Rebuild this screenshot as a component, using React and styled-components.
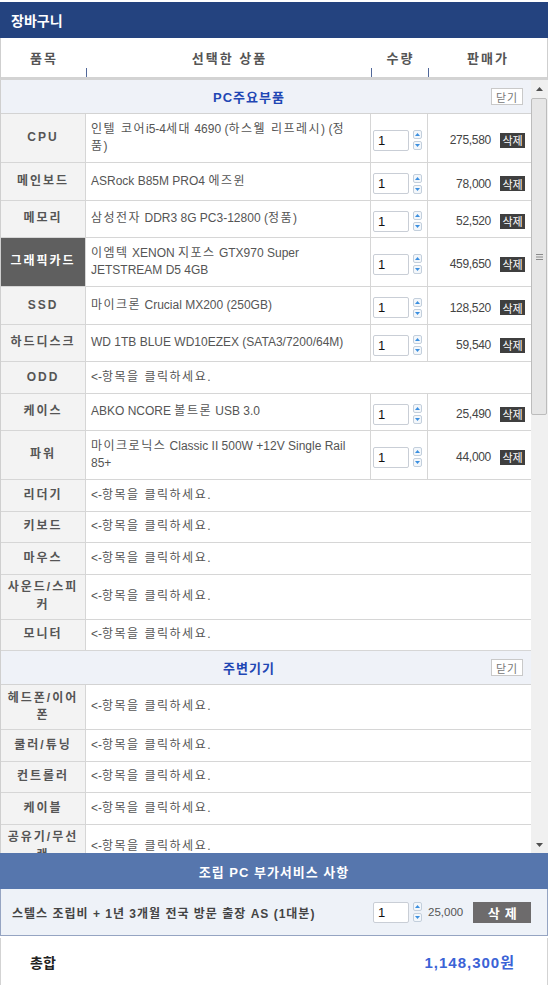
import React from 'react'
import styled, { createGlobalStyle } from 'styled-components'

const GlobalStyle = createGlobalStyle`
  body {
    margin: 0;
    background: #fff;
    font-family: "Liberation Sans", "Noto Sans CJK KR", sans-serif;
  }
  * { box-sizing: border-box; }
`;

const Page = styled.div`
    width: 548px;
    height: 985px;
    padding-top: 2px;
    display: flex;
    flex-direction: column;
    overflow: hidden;
`;

const TitleBar = styled.div`
    height: 36px;
    flex-shrink: 0;
    background: #24437f;
    color: #fff;
    font-size: 14px;
    font-weight: bold;
    display: flex;
    align-items: center;
    padding-left: 11px;
`;

const ColumnHead = styled.div`
    display: grid;
    grid-template-columns: 86px 285px 57px 1fr;
    height: 42px;
    flex-shrink: 0;
    border-left: 1px solid #cfcfcf;
    border-right: 1px solid #cfcfcf;
    border-bottom: 3px solid #d3d3d3;
`;

const HeadCell = styled.div`
    position: relative;
    display: flex;
    align-items: center;
    justify-content: center;
    font-size: 13px;
    font-weight: bold;
    color: #555;
    letter-spacing: 2px;
    padding-bottom: 1px;

    &::before {
        content: '';
        display: ${props => props.$tick ? 'block' : 'none'};
        position: absolute;
        left: -1px;
        bottom: 0;
        width: 1px;
        height: 9px;
        background: #51689a;
    }
`;

const Body = styled.div`
    display: flex;
    height: 773px;
    flex-shrink: 0;
`;

const Content = styled.div`
    width: 531px;
    overflow: hidden;
    border-left: 1px solid #cfcfcf;
`;

const SectionHead = styled.div`
    display: flex;
    align-items: center;
    height: 34px;
    background: #eff2f8;
    border-bottom: 1px solid #d3d3d3;
    padding-left: 6px;
    padding-right: 8px;
`;

const SectionTitle = styled.div`
    flex: 1;
    text-align: center;
    color: #1f47b4;
    font-size: 13px;
    font-weight: bold;
    letter-spacing: 1px;
`;

const CloseButton = styled.div`
    width: 32px;
    height: 17px;
    background: #fff;
    border: 1px solid #c9c9c9;
    color: #777;
    font-size: 11px;
    display: flex;
    align-items: center;
    justify-content: center;
    letter-spacing: 1px;
`;

const Row = styled.div`
    display: grid;
    grid-template-columns: 85px 285px 57px 1fr;
    border-bottom: 1px solid #d6d6d6;
`;

const Label = styled.div`
    display: flex;
    align-items: center;
    justify-content: center;
    text-align: center;
    padding: 4.5px 2px;
    background: ${props => props.$active ? '#5f5f5f' : '#f3f3f3'};
    color: ${props => props.$active ? '#fff' : '#555'};
    border-right: 1px solid #d6d6d6;
    font-size: 12px;
    font-weight: bold;
    letter-spacing: 2px;
    line-height: 17.5px;
`;

const Product = styled.div`
    grid-column: ${props => props.$wide ? 'span 3' : 'auto'};
    padding: 6.5px ${props => props.$wide ? 2 : 10}px 6.5px 5px;
    font-size: 12px;
    line-height: 17.5px;
    color: #555;
    border-right: ${props => props.$wide ? 'none' : '1px solid #d6d6d6'};
    display: flex;
    align-items: center;
`;

const ProductText = styled.div``;

const Hangul = styled.span`
    letter-spacing: 1.5px;
`;

const QtyCell = styled.div`
    display: flex;
    align-items: center;
    gap: 4px;
    padding: 10px 0 5.5px 2px;
    border-right: 1px solid #d6d6d6;
`;

const QtyInput = styled.div`
    width: 36px;
    height: 21px;
    flex-shrink: 0;
    border: 1px solid #c9ced6;
    border-radius: 2px;
    background: #fff;
    font-size: 13px;
    color: #111;
    display: flex;
    align-items: center;
    padding-left: 4px;
`;

const Spinner = styled.div`
    display: flex;
    flex-direction: column;
    gap: 2px;
    margin-left: ${props => props.$gap || 0}px;
`;

const PriceCell = styled.div`
    display: flex;
    align-items: center;
    justify-content: flex-end;
    gap: 9px;
    padding: 10px 6px 5.5px 0;
    font-size: 12px;
    letter-spacing: -0.3px;
    color: #444;
`;

const DeleteButton = styled.div`
    background: #3f3f3f;
    color: #fff;
    font-size: 11px;
    letter-spacing: 0;
    height: 15px;
    width: 25px;
    display: flex;
    align-items: center;
    justify-content: center;
`;

const ScrollBar = styled.div`
    width: 17px;
    display: flex;
    flex-direction: column;
    background: #f0f0f0;
`;

const ScrollArrow = styled.div`
    height: 17px;
    display: flex;
    align-items: center;
    justify-content: center;
`;

const ScrollTrack = styled.div`
    flex: 1;
    padding: 1px 1px 0 0;
`;

const Thumb = styled.div`
    height: 317px;
    background: #e6e6e6;
    border: 1px solid #bcbcbc;
    border-radius: 2px;
    display: flex;
    align-items: center;
    justify-content: center;
`;

const ServiceTitle = styled.div`
    height: 36px;
    flex-shrink: 0;
    background: #5676ad;
    color: #fff;
    font-size: 13px;
    font-weight: bold;
    letter-spacing: 1px;
    display: flex;
    align-items: center;
    justify-content: center;
`;

const ServiceRow = styled.div`
    height: 47px;
    flex-shrink: 0;
    background: #eef2f8;
    border: 1px solid #95a4c2;
    border-top: none;
    display: flex;
    align-items: center;
`;

const ServiceName = styled.div`
    width: 372px;
    padding-left: 11px;
    font-size: 12px;
    font-weight: bold;
    color: #444;
    letter-spacing: 1px;
`;

const ServicePrice = styled.div`
    margin-left: 6px;
    font-size: 11.5px;
    color: #555;
`;

const BigDelete = styled.div`
    margin-left: 10px;
    width: 58px;
    height: 21px;
    background: #6d6b6c;
    color: #fff;
    font-size: 13px;
    font-weight: bold;
    letter-spacing: 5px;
    padding-left: 5px;
    display: flex;
    align-items: center;
    justify-content: center;
`;

const TotalRow = styled.div`
    margin-top: 2px;
    height: 48px;
    flex-shrink: 0;
    border: 1px solid #d3d3d3;
    border-top: none;
    display: flex;
    align-items: center;
    justify-content: space-between;
    padding: 0 32px 0 29px;
`;

const TotalLabel = styled.div`
    font-size: 14px;
    font-weight: bold;
    color: #222;
`;

const TotalAmount = styled.div`
    font-size: 15px;
    font-weight: bold;
    color: #3b63d6;
    letter-spacing: 1px;
`;

const parts = [
    { label: 'CPU', name: '인텔 코어i5-4세대 4690 (하스웰 리프레시) (정품)', price: '275,580' },
    { label: '메인보드', name: 'ASRock B85M PRO4 에즈윈', price: '78,000' },
    { label: '메모리', name: '삼성전자 DDR3 8G PC3-12800 (정품)', price: '52,520' },
    { label: '그래픽카드', name: '이엠텍 XENON 지포스 GTX970 Super JETSTREAM D5 4GB', price: '459,650', active: true },
    { label: 'SSD', name: '마이크론 Crucial MX200 (250GB)', price: '128,520' },
    { label: '하드디스크', name: 'WD 1TB BLUE WD10EZEX (SATA3/7200/64M)', price: '59,540' },
    { label: 'ODD' },
    { label: '케이스', name: 'ABKO NCORE 볼트론 USB 3.0', price: '25,490' },
    { label: '파워', name: '마이크로닉스 Classic II 500W +12V Single Rail 85+', price: '44,000' },
    { label: '리더기' },
    { label: '키보드' },
    { label: '마우스' },
    { label: '사운드/스피커' },
    { label: '모니터' },
];

const extras = [
    { label: '헤드폰/이어폰' },
    { label: '쿨러/튜닝' },
    { label: '컨트롤러' },
    { label: '케이블' },
    { label: '공유기/무선랜' },
    { label: '기타' },
];

// Hangul runs get a little extra tracking so they are as wide as in the original font
function spaced(text) {
    return text
        .split(/([가-힣]+(?: [가-힣]+)*)/)
        .map((part, i) => (i % 2 ? <Hangul key={i}>{part}</Hangul> : part));
}

function SpinButton({ up }) {
    return (
        <svg width="9" height="9" viewBox="0 0 9 9">
            <rect x="0.5" y="0.5" width="8" height="8" rx="1.5" fill="#f3f7fb" stroke="#c3cfdc" />
            {up
                ? <polygon points="2,6 7,6 4.5,3" fill="#3b8fe0" />
                : <polygon points="2,3 7,3 4.5,6" fill="#3b8fe0" />}
        </svg>
    );
}

function PartRow({ item }) {
    return (
        <Row>
            <Label $active={item.active}>{item.label}</Label>
            {item.name ? (
                <>
                    <Product><ProductText>{spaced(item.name)}</ProductText></Product>
                    <QtyCell>
                        <QtyInput>1</QtyInput>
                        <Spinner>
                            <SpinButton up />
                            <SpinButton />
                        </Spinner>
                    </QtyCell>
                    <PriceCell>
                        {item.price}
                        <DeleteButton>삭제</DeleteButton>
                    </PriceCell>
                </>
            ) : (
                <Product $wide><ProductText>&lt;-{spaced('항목을 클릭하세요')}.</ProductText></Product>
            )}
        </Row>
    );
}

function Section({ title, items }) {
    return (
        <>
            <SectionHead>
                <SectionTitle>{title}</SectionTitle>
                <CloseButton>닫기</CloseButton>
            </SectionHead>
            {items.map(item => <PartRow key={item.label} item={item} />)}
        </>
    );
}

export default function App() {
    return (
        <Page>
            <GlobalStyle />
            <TitleBar>장바구니</TitleBar>
            <ColumnHead>
                <HeadCell>품목</HeadCell>
                <HeadCell $tick>선택한 상품</HeadCell>
                <HeadCell $tick>수량</HeadCell>
                <HeadCell $tick>판매가</HeadCell>
            </ColumnHead>
            <Body>
                <Content>
                    <Section title="PC주요부품" items={parts} />
                    <Section title="주변기기" items={extras} />
                </Content>
                <ScrollBar>
                    <ScrollArrow>
                        <svg width="7" height="4" viewBox="0 0 7 4"><polygon points="0,4 7,4 3.5,0" fill="#505050" /></svg>
                    </ScrollArrow>
                    <ScrollTrack>
                        <Thumb>
                            <svg width="7" height="6" viewBox="0 0 7 6">
                                <rect y="0" width="7" height="1" fill="#8a8a8a" />
                                <rect y="2.5" width="7" height="1" fill="#8a8a8a" />
                                <rect y="5" width="7" height="1" fill="#8a8a8a" />
                            </svg>
                        </Thumb>
                    </ScrollTrack>
                    <ScrollArrow>
                        <svg width="7" height="4" viewBox="0 0 7 4"><polygon points="0,0 7,0 3.5,4" fill="#505050" /></svg>
                    </ScrollArrow>
                </ScrollBar>
            </Body>
            <ServiceTitle>조립 PC 부가서비스 사항</ServiceTitle>
            <ServiceRow>
                <ServiceName>스텔스 조립비 + 1년 3개월 전국 방문 출장 AS (1대분)</ServiceName>
                <QtyInput>1</QtyInput>
                <Spinner $gap={4}>
                    <SpinButton up />
                    <SpinButton />
                </Spinner>
                <ServicePrice>25,000</ServicePrice>
                <BigDelete>삭제</BigDelete>
            </ServiceRow>
            <TotalRow>
                <TotalLabel>총합</TotalLabel>
                <TotalAmount>1,148,300원</TotalAmount>
            </TotalRow>
        </Page>
    );
}
